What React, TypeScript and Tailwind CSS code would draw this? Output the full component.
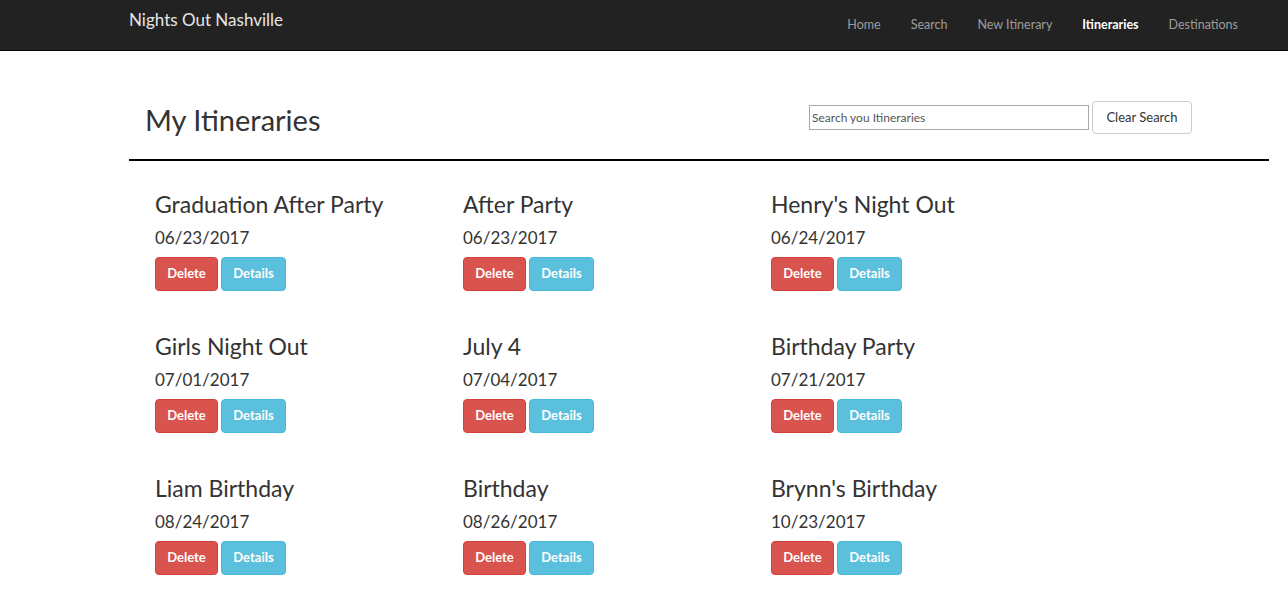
import React from "react";

const items = [
  { name: "Graduation After Party", date: "06/23/2017" },
  { name: "After Party", date: "06/23/2017" },
  { name: "Henry's Night Out", date: "06/24/2017" },
  { name: "Girls Night Out", date: "07/01/2017" },
  { name: "July 4", date: "07/04/2017" },
  { name: "Birthday Party", date: "07/21/2017" },
  { name: "Liam Birthday", date: "08/24/2017" },
  { name: "Birthday", date: "08/26/2017" },
  { name: "Brynn's Birthday", date: "10/23/2017" },
];

const links = ["Home", "Search", "New Itinerary", "Itineraries", "Destinations"];

export default function App() {
  return (
    <div className="min-h-[601px] bg-white text-[#333] font-['Lato','Open_Sans',sans-serif]">
      {/* navbar */}
      <nav className="h-[51px] bg-[#222] border-b border-[#080808] flex items-start justify-between pl-[129px] pr-[50px]">
        <a className="text-[#e6e6e6] text-[17px] leading-[19px] pt-[10px]">Nights Out Nashville</a>
        <ul className="flex gap-[30px] pt-[16px]">
          {links.map((l) => (
            <li
              key={l}
              className={
                "text-[12.5px] leading-[18px] " +
                (l === "Itineraries" ? "text-white font-bold" : "text-[#9d9d9d]")
              }
            >
              {l}
            </li>
          ))}
        </ul>
      </nav>

      <main className="ml-[129px] mr-[19px]">
        {/* header */}
        <div className="flex items-start justify-between pl-4 pr-[77px] pt-[50px] pb-[21px] border-b-2 border-black">
          <h1 className="text-[29px] leading-[36px] mt-[1px] text-[#333]">My Itineraries</h1>
          <div className="flex items-center gap-[3px]">
            <input
              className="w-[280px] h-[25px] border border-[#a9a9a9] px-[2px] text-[12px] text-[#555] placeholder:text-[#555] outline-none"
              placeholder="Search you Itineraries"
            />
            <button className="w-[100px] h-[33px] border border-[#ccc] rounded bg-white text-[13px] text-[#333]">
              Clear Search
            </button>
          </div>
        </div>

        {/* itinerary grid */}
        <div className="grid grid-cols-[308px_308px_308px] pl-[26px] pt-[32px] gap-y-[44px]">
          {items.map((it) => (
            <div key={it.name} className="flex flex-col">
              <h3 className="text-[23px] leading-[30px] -mt-[4px]">{it.name}</h3>
              <p className="text-[17px] leading-[24px] mt-[7px]">{it.date}</p>
              <div className="flex gap-[3px] mt-[7px]">
                <button className="w-[63px] h-[34px] rounded bg-[#d9534f] border border-[#d43f3a] text-white text-[13px] font-bold">
                  Delete
                </button>
                <button className="w-[65px] h-[34px] rounded bg-[#5bc0de] border border-[#46b8da] text-white text-[13px] font-bold">
                  Details
                </button>
              </div>
            </div>
          ))}
        </div>
      </main>
    </div>
  );
}
